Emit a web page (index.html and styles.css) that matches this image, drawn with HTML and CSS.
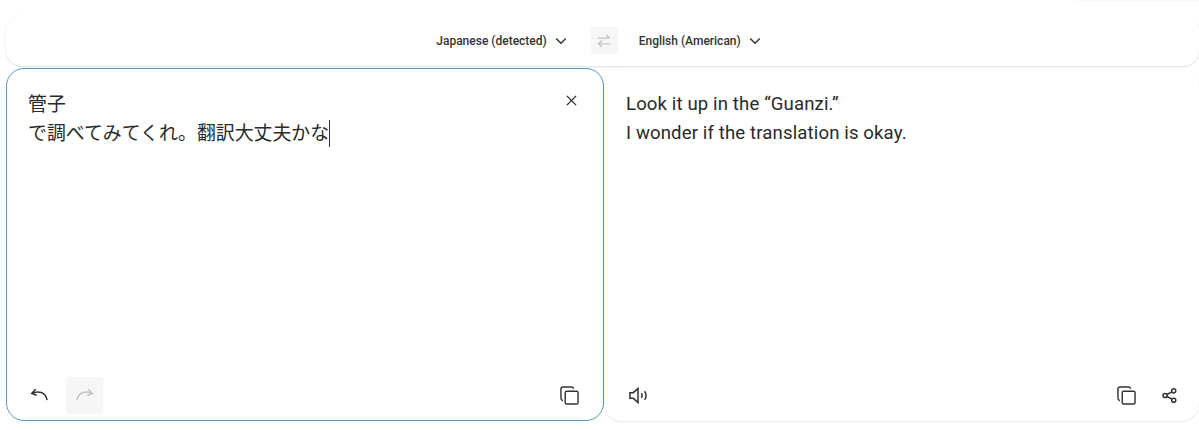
FILE: index.html
```html
<!DOCTYPE html>
<html lang="en">
<head>
<meta charset="utf-8">
<title>Translator</title>
<link rel="stylesheet" href="styles.css">
</head>
<body>
<div class="page">
  <div class="top-sliver"></div>
  <header class="toolbar">
    <button class="lang lang-source"><span>Japanese (detected)</span>
      <svg class="chev" viewBox="0 0 12 8"><path d="M1.2 1.4 6 6.2l4.8-4.8"/></svg></button>
    <button class="swap" aria-label="Swap">
      <svg viewBox="0 0 16 16"><path d="M1 4.800h13M10.500 1 14.300 4.800M15 11.200H2M5.500 7.500 1.800 11.200 5.500 15"/></svg>
    </button>
    <button class="lang lang-target"><span>English (American)</span>
      <svg class="chev" viewBox="0 0 12 8"><path d="M1.2 1.4 6 6.2l4.8-4.8"/></svg></button>
  </header>
  <main class="panels">
    <section class="panel source">
      <div class="panel-body">
        <div class="text ja">管子<br>で調べてみてくれ。翻訳大丈夫かな<span class="caret"></span></div>
        <button class="icon close" aria-label="Clear">
          <svg viewBox="0 0 12 12"><path d="M1 1l10 10M11 1 1 11"/></svg>
        </button>
      </div>
      <footer class="panel-foot">
        <div class="group">
          <button class="icon btn" aria-label="Undo"><svg viewBox="0 0 20 20"><path d="M6 3.500 1.800 7.800l5.200 2M2.200 7.800c6.500-3.200 14-1.500 15.800 7"/></svg></button>
          <button class="icon btn disabled" aria-label="Redo"><svg viewBox="0 0 20 20"><path d="M14 3.500l4.200 4.300-5.200 2M17.800 7.800c-6.500-3.200-14-1.500-15.800 7"/></svg></button>
        </div>
        <div class="group">
          <button class="icon btn copy" aria-label="Copy"><svg viewBox="0 0 20 20"><rect x="5.500" y="5.500" width="13.500" height="13.500" rx="1.500"/><path d="M3 15.500C1.800 15 1 14 1 13V3.200C1 2 2 1 3.200 1H12c1.200 0 2 .8 2.500 2"/></svg></button>
        </div>
      </footer>
    </section>
    <section class="panel target">
      <div class="panel-body">
        <div class="text en">Look it up in the “Guanzi.”<br>I wonder if the translation is okay.</div>
      </div>
      <footer class="panel-foot">
        <div class="group">
          <button class="icon btn" aria-label="Listen"><svg viewBox="0 0 20 20"><path d="M1 7v6h3.500l5 4.500v-15L4.500 7zM13 7.500c1 1.500 1 3.500 0 5M16.500 5.500c1.800 2.800 1.800 6.200 0 9"/></svg></button>
        </div>
        <div class="group right">
          <button class="icon btn copy" aria-label="Copy"><svg viewBox="0 0 20 20"><rect x="5.500" y="5.500" width="13.500" height="13.500" rx="1.500"/><path d="M3 15.500C1.800 15 1 14 1 13V3.200C1 2 2 1 3.200 1H12c1.200 0 2 .8 2.500 2"/></svg></button>
          <button class="icon btn share" aria-label="Share"><svg viewBox="0 0 16 16"><circle cx="3.300" cy="8" r="2.200"/><circle cx="12.500" cy="3" r="2.200"/><circle cx="12.500" cy="13" r="2.200"/><path d="M5.300 6.900l5.200-2.800M5.300 9.100l5.200 2.800"/></svg></button>
        </div>
      </footer>
    </section>
  </main>
</div>
</body>
</html>
```
FILE: styles.css
```css
* { box-sizing: border-box; }
html, body { margin: 0; padding: 0; }
body {
  width: 1199px;
  height: 430px;
  overflow: hidden;
  background: #fff;
  font-family: Roboto, "Noto Sans CJK JP", sans-serif;
  color: #2a2a2a;
}
button {
  font: inherit;
  color: inherit;
  background: none;
  border: 0;
  padding: 0;
  margin: 0;
}
svg { display: block; fill: none; stroke: currentColor; }
.page {
  display: flex;
  flex-direction: column;
  padding-left: 6px;
}
.top-sliver {
  height: 1px;
  width: 123px;
  margin-left: auto;
  background: #f7f7f7;
}
.toolbar {
  margin-top: 14px;
  height: 51px;
  width: 1193px;
  border-radius: 16px;
  background: #fff;
  box-shadow: 0 1px 2px rgba(0, 0, 0, .12), 0 0 2px rgba(0, 0, 0, .04);
  display: flex;
  align-items: center;
  justify-content: center;
  padding-right: 8px;
}
.lang {
  display: flex;
  align-items: center;
  font-size: 12px;
  font-weight: 500;
  color: #333;
  gap: 8px;
}
.lang-source { margin-right: 24px; }
.lang-target { margin-left: 21px; }
.chev { width: 12px; height: 8px; stroke-width: 1.400; }
.swap {
  width: 27px;
  height: 27px;
  border-radius: 3px;
  background: #f6f6f6;
  color: #c3c3c3;
  display: flex;
  align-items: center;
  justify-content: center;
}
.swap svg { width: 14px; height: 14px; stroke-width: 1.500; }
.panels {
  display: flex;
  margin-top: 2px;
  height: 353px;
}
.panel {
  display: flex;
  flex-direction: column;
  border-radius: 18px;
  background: #fff;
}
.source {
  width: 598px;
  border: 1px solid #5a94c4;
}
.target {
  width: 595px;
  box-shadow: 0 1px 2px rgba(0, 0, 0, .1);
}
.panel-body {
  flex: 1;
  display: flex;
  justify-content: space-between;
  align-items: flex-start;
}
.text {
  line-height: 29px;
  color: #2a2a2a;
}
.ja { padding: 21px 0 0 21px; font-size: 18.900px; }
.en { padding: 22px 0 0 22px; font-size: 18.600px; letter-spacing: .12px; line-height: 28.500px; }
.caret {
  display: inline-block;
  width: 1px;
  height: 27px;
  background: #333;
  vertical-align: -7px;
}
.icon { display: flex; align-items: center; justify-content: center; }
.close { width: 12px; height: 12px; margin: 25px 26px 0 0; color: #2a2a2a; }
.close svg { width: 11px; height: 11px; stroke-width: 1.400; }
.panel-foot {
  display: flex;
  justify-content: space-between;
  align-items: center;
  height: 44px;
  margin-bottom: 4px;
}
.source .panel-foot { padding: 0 15px 0 14px; margin-bottom: 3px; }
.target .panel-foot { padding: 0 22px 0 25px; }
.group { display: flex; align-items: center; gap: 8px; }
.group.right { gap: 26px; }
.btn { width: 37px; height: 37px; color: #333; }
.btn svg { width: 19px; height: 19px; stroke-width: 1.600; }
.target .btn { width: auto; }
.source .copy { width: 37px; }
.disabled { background: #f6f6f6; border-radius: 4px; color: #c3c3c3; }
.share svg { width: 15px; height: 15px; }
.copy svg { stroke-width: 1.500; }
```
